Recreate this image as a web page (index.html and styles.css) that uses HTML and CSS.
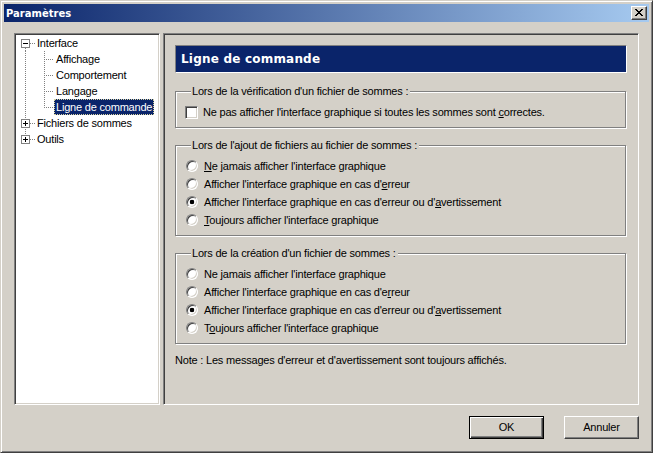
FILE: index.html
```html
<!DOCTYPE html>
<html lang="fr">
<head>
<meta charset="utf-8">
<title>Paramètres</title>
<link rel="stylesheet" href="styles.css">
</head>
<body>
<div class="window">
  <div class="titlebar">
    <span class="title">Paramètres</span>
    <span class="close">
      <svg width="8" height="7" viewBox="0 0 8 7" shape-rendering="crispEdges">
        <path fill="#000" d="M0 0h2v1h-2zM6 0h2v1h-2zM1 1h2v1h-2zM5 1h2v1h-2zM2 2h4v1h-4zM3 3h2v1h-2zM2 4h4v1h-4zM1 5h2v1h-2zM5 5h2v1h-2zM0 6h2v1h-2zM6 6h2v1h-2z"/>
      </svg>
    </span>
  </div>
  <div class="client">
    <div class="main">
      <div class="tree">
        <div class="row">
          <span class="g1 first"><span class="exp minus"></span></span>
          <span class="label">Interface</span>
        </div>
        <div class="row">
          <span class="g1 vline"></span>
          <span class="g2 vfull"></span>
          <span class="label">Affichage</span>
        </div>
        <div class="row">
          <span class="g1 vline"></span>
          <span class="g2 vfull"></span>
          <span class="label">Comportement</span>
        </div>
        <div class="row">
          <span class="g1 vline"></span>
          <span class="g2 vfull"></span>
          <span class="label">Langage</span>
        </div>
        <div class="row">
          <span class="g1 vline"></span>
          <span class="g2 vhalf"></span>
          <span class="label selected">Ligne de commande</span>
        </div>
        <div class="row">
          <span class="g1 vfull"><span class="exp plus"></span></span>
          <span class="label">Fichiers de sommes</span>
        </div>
        <div class="row">
          <span class="g1 vhalf"><span class="exp plus"></span></span>
          <span class="label">Outils</span>
        </div>
      </div>
      <div class="panel">
        <div class="header">Ligne de commande</div>

        <fieldset class="group">
          <legend>Lors de la vérification d'un fichier de sommes :</legend>
          <div class="opt"><span class="check"></span><span>Ne pas afficher l'interface graphique si toutes les sommes sont <u>c</u>orrectes.</span></div>
        </fieldset>

        <fieldset class="group">
          <legend>Lors de l'ajout de fichiers au fichier de sommes :</legend>
          <div class="opt"><span class="radio"></span><span><u>N</u>e jamais afficher l'interface graphique</span></div>
          <div class="opt"><span class="radio"></span><span>Afficher l'interface graphique en cas d'<u>e</u>rreur</span></div>
          <div class="opt"><span class="radio on"></span><span>Afficher l'interface graphique en cas d'erreur ou d'<u>a</u>vertissement</span></div>
          <div class="opt"><span class="radio"></span><span><u>T</u>oujours afficher l'interface graphique</span></div>
        </fieldset>

        <fieldset class="group">
          <legend>Lors de la création d'un fichier de sommes :</legend>
          <div class="opt"><span class="radio"></span><span>Ne jamais afficher l'interface graphique</span></div>
          <div class="opt"><span class="radio"></span><span>Afficher l'interface graphique en cas d'e<u>r</u>reur</span></div>
          <div class="opt"><span class="radio on"></span><span>Afficher l'interface graphique en cas d'erreur ou d'<u>a</u>vertissement</span></div>
          <div class="opt"><span class="radio"></span><span>T<u>o</u>ujours afficher l'interface graphique</span></div>
        </fieldset>

        <p class="note">Note : Les messages d'erreur et d'avertissement sont toujours affichés.</p>
      </div>
    </div>
    <div class="buttons">
      <button class="btn default" type="button">OK</button>
      <button class="btn" type="button">Annuler</button>
    </div>
  </div>
</div>
</body>
</html>
```

FILE: styles.css
```css
html, body {
  margin: 0;
  padding: 0;
  background: #d4d0c8;
}

body {
  font-family: "Liberation Sans", Arial, sans-serif;
  font-size: 11px;
  letter-spacing: -0.2px;
  color: #000;
}

.window {
  width: 653px;
  height: 453px;
  box-sizing: border-box;
  border: 1px solid;
  border-color: #d4d0c8 #404040 #404040 #d4d0c8;
  box-shadow: inset 1px 1px 0 #fff, inset -1px -1px 0 #808080;
  padding: 3px;
  background: #d4d0c8;
  display: flex;
  flex-direction: column;
}

/* Title bar */
.titlebar {
  height: 18px;
  flex: none;
  display: flex;
  align-items: center;
  justify-content: space-between;
  padding: 0 2px;
  background: linear-gradient(to right, #0a246a, #a6caf0);
}

.title {
  font-family: "DejaVu Sans", Verdana, sans-serif;
  font-weight: bold;
  font-size: 10px;
  letter-spacing: 0;
  color: #fff;
  line-height: 13px;
}

.close {
  width: 16px;
  height: 14px;
  box-sizing: border-box;
  background: #d4d0c8;
  border: 1px solid;
  border-color: #fff #404040 #404040 #fff;
  box-shadow: inset -1px -1px 0 #808080;
  display: flex;
  align-items: center;
  justify-content: center;
  padding: 0 1px 1px 0;
}

.close svg {
  display: block;
}

/* Client area */
.client {
  flex: 1;
  display: flex;
  flex-direction: column;
  padding: 11px 10px 10px 10px;
}

.main {
  height: 372px;
  display: flex;
  gap: 3px;
}

/* Tree */
.tree {
  width: 146px;
  box-sizing: border-box;
  background: #fff;
  border: 1px solid;
  border-color: #808080 #fff #fff #808080;
  box-shadow: inset 1px 1px 0 #404040, inset -1px -1px 0 #d4d0c8;
  padding: 1px;
}

.row {
  height: 16px;
  display: flex;
  align-items: stretch;
  white-space: nowrap;
}

.g1, .g2 {
  width: 19px;
  flex: none;
  display: flex;
  align-items: flex-start;
  background-repeat: no-repeat;
}

.g1.first {
  background-image:
    repeating-linear-gradient(to right, #808080 0 1px, transparent 1px 2px),
    repeating-linear-gradient(to bottom, #808080 0 1px, transparent 1px 2px);
  background-size: 5px 1px, 1px 3px;
  background-position: 14px 8px, 9px 13px;
}

.g1.vfull {
  background-image:
    repeating-linear-gradient(to right, #808080 0 1px, transparent 1px 2px),
    repeating-linear-gradient(to bottom, #808080 0 1px, transparent 1px 2px);
  background-size: 5px 1px, 1px 16px;
  background-position: 14px 8px, 9px 0;
}

.g1.vhalf {
  background-image:
    repeating-linear-gradient(to right, #808080 0 1px, transparent 1px 2px),
    repeating-linear-gradient(to bottom, #808080 0 1px, transparent 1px 2px);
  background-size: 5px 1px, 1px 4px;
  background-position: 14px 8px, 9px 0;
}

.g1.vline {
  background-image:
    repeating-linear-gradient(to bottom, #808080 0 1px, transparent 1px 2px);
  background-size: 1px 16px;
  background-position: 9px 0;
}

.g2 {
  background-image:
    repeating-linear-gradient(to right, #808080 0 1px, transparent 1px 2px),
    repeating-linear-gradient(to bottom, #808080 0 1px, transparent 1px 2px);
  background-position: 9px 8px, 9px 0;
}

.g2.vfull {
  background-size: 10px 1px, 1px 16px;
}

.g2.vhalf {
  background-size: 10px 1px, 1px 9px;
}

.exp {
  width: 9px;
  height: 9px;
  box-sizing: border-box;
  margin: 4px 0 0 5px;
  border: 1px solid #808080;
  background-color: #fff;
  background-repeat: no-repeat;
}

.exp.minus {
  background-image: linear-gradient(#000, #000);
  background-size: 5px 1px;
  background-position: center;
}

.exp.plus {
  background-image: linear-gradient(#000, #000), linear-gradient(#000, #000);
  background-size: 5px 1px, 1px 5px;
  background-position: center, center;
}

.label {
  padding: 0 2px;
  line-height: 16px;
  height: 16px;
}

.label.selected {
  background: #0a246a;
  color: #fff;
  outline: 1px dotted #d8d4a0;
  outline-offset: -1px;
}

/* Right panel */
.panel {
  flex: 1;
  box-sizing: border-box;
  border: 1px solid;
  border-color: #808080 #fff #fff #808080;
  box-shadow: inset 1px 1px 0 #404040, inset -1px -1px 0 #d4d0c8;
  padding: 11px 11px 0 11px;
  display: flex;
  flex-direction: column;
}

.header {
  height: 28px;
  box-sizing: border-box;
  background: #0a246a;
  color: #fff;
  border: 1px solid;
  border-color: #808080 #fff #fff #808080;
  font-family: "DejaVu Sans", Verdana, sans-serif;
  font-weight: bold;
  font-size: 12px;
  letter-spacing: 0.2px;
  line-height: 26px;
  padding-left: 5px;
}

.group {
  margin: 11px 1px 0 0;
  padding: 5px 0 6px 9px;
  border: 1px solid #808080;
  box-shadow: 1px 1px 0 #fff, inset 1px 1px 0 #fff;
  min-width: 0;
}

.group:first-of-type {
  margin-top: 12px;
}

.group legend {
  margin-left: 6px;
  padding: 0 2px 0 1px;
  line-height: 13px;
  background: #d4d0c8;
}

.opt {
  height: 18px;
  display: flex;
  align-items: center;
  white-space: nowrap;
}

.check {
  width: 13px;
  height: 13px;
  flex: none;
  box-sizing: border-box;
  background: #fff;
  border: 1px solid;
  border-color: #808080 #fff #fff #808080;
  box-shadow: inset 1px 1px 0 #404040, inset -1px -1px 0 #d4d0c8;
  margin-right: 5px;
}

.radio {
  width: 12px;
  height: 12px;
  flex: none;
  box-sizing: border-box;
  border-radius: 50%;
  background: #fff;
  border: 1px solid;
  border-color: #808080 #fff #fff #808080;
  box-shadow: inset 1px 1px 0 #404040, inset -1px -1px 0 #d4d0c8;
  margin: 0 6px 0 1px;
}

.radio.on {
  background: radial-gradient(circle, #000 0 2px, #fff 2.6px);
}

.note {
  margin: 10px 0 0 0;
  line-height: 13px;
}

/* Buttons */
.buttons {
  margin-top: 11px;
  display: flex;
  justify-content: flex-end;
  gap: 20px;
}

.btn {
  width: 75px;
  height: 23px;
  box-sizing: border-box;
  margin: 0;
  padding: 0 0 1px 0;
  font-family: "Liberation Sans", Arial, sans-serif;
  font-size: 11px;
  letter-spacing: -0.2px;
  color: #000;
  background: #d4d0c8;
  border: 1px solid;
  border-color: #fff #404040 #404040 #fff;
  box-shadow: inset -1px -1px 0 #808080;
}

.btn.default {
  border-color: #000;
  box-shadow: inset 1px 1px 0 #fff, inset -1px -1px 0 #404040, inset -2px -2px 0 #808080;
}
```
